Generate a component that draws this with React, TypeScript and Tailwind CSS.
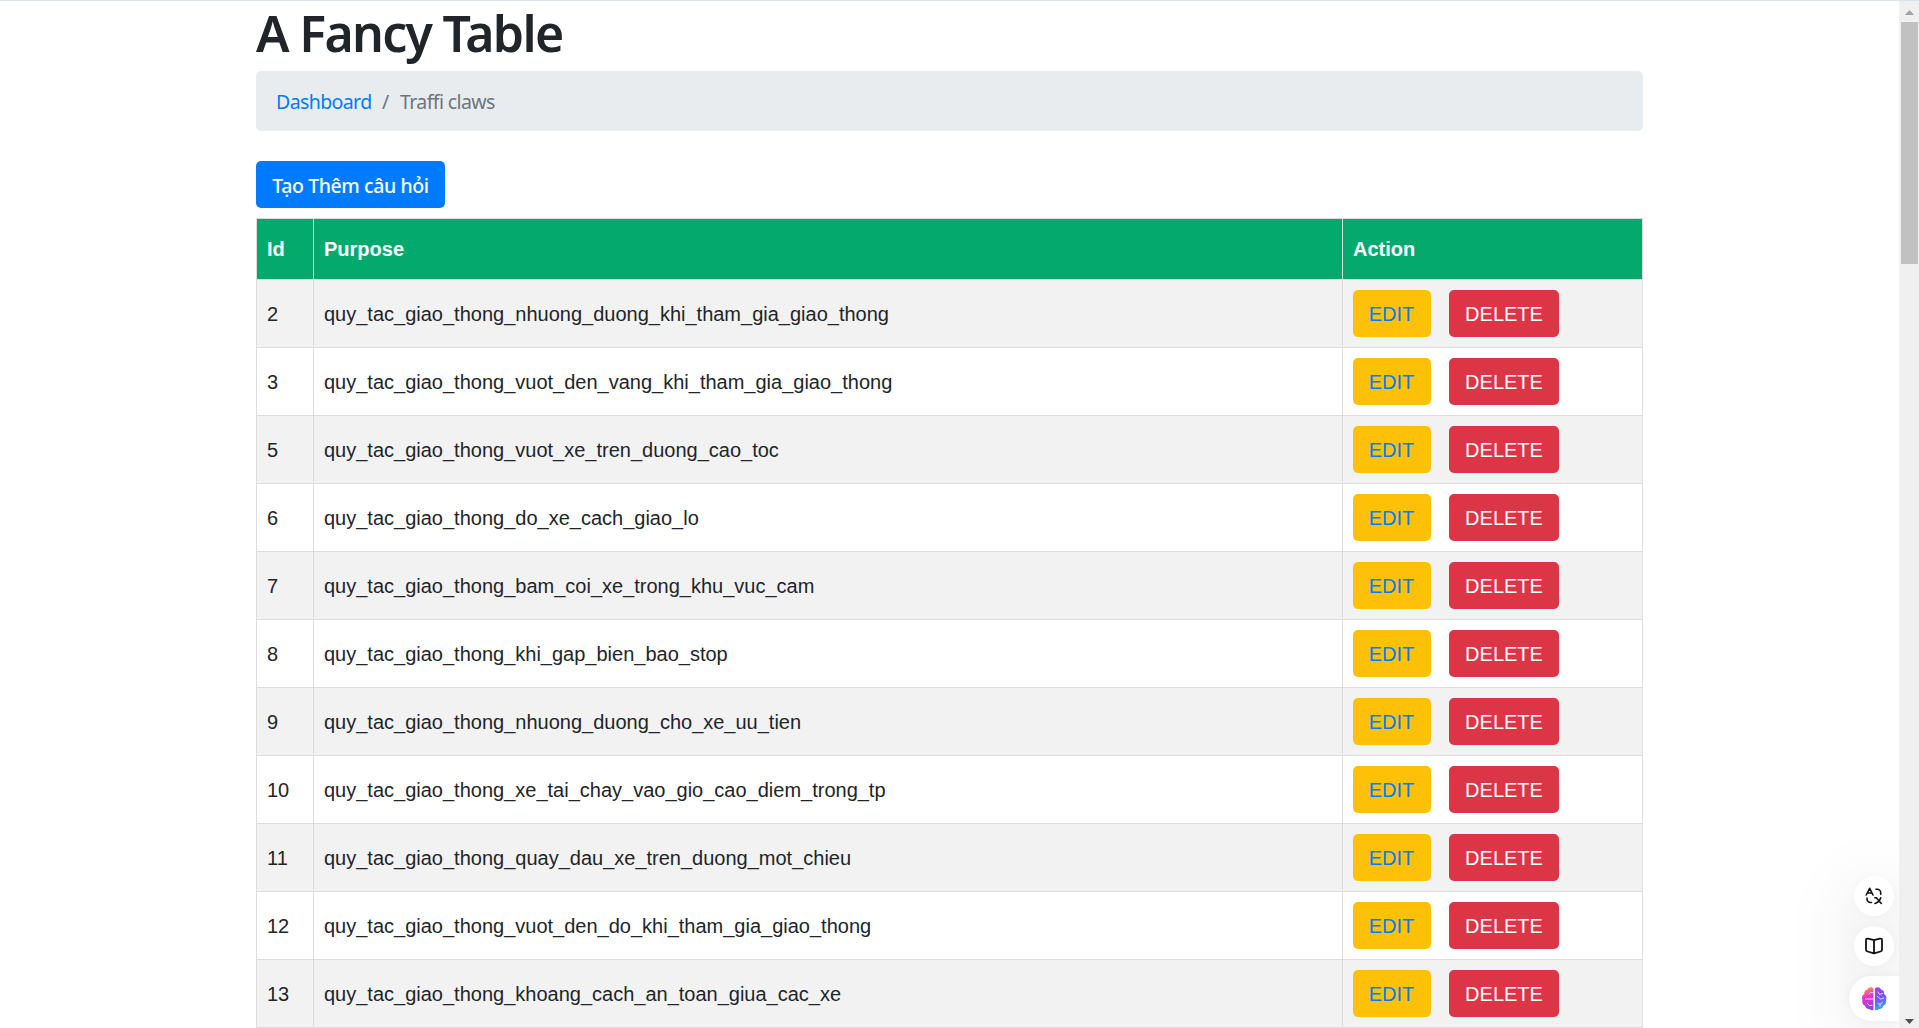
import React from "react";

const rows: [number, string][] = [
  [2, "quy_tac_giao_thong_nhuong_duong_khi_tham_gia_giao_thong"],
  [3, "quy_tac_giao_thong_vuot_den_vang_khi_tham_gia_giao_thong"],
  [5, "quy_tac_giao_thong_vuot_xe_tren_duong_cao_toc"],
  [6, "quy_tac_giao_thong_do_xe_cach_giao_lo"],
  [7, "quy_tac_giao_thong_bam_coi_xe_trong_khu_vuc_cam"],
  [8, "quy_tac_giao_thong_khi_gap_bien_bao_stop"],
  [9, "quy_tac_giao_thong_nhuong_duong_cho_xe_uu_tien"],
  [10, "quy_tac_giao_thong_xe_tai_chay_vao_gio_cao_diem_trong_tp"],
  [11, "quy_tac_giao_thong_quay_dau_xe_tren_duong_mot_chieu"],
  [12, "quy_tac_giao_thong_vuot_den_do_khi_tham_gia_giao_thong"],
  [13, "quy_tac_giao_thong_khoang_cach_an_toan_giua_cac_xe"],
];

function TranslateIcon() {
  return (
    <svg width="18" height="18" viewBox="0 0 18 18" fill="none" stroke="#111" strokeWidth="1.6" strokeLinecap="round" strokeLinejoin="round">
      <path d="M1.200 8 4.700 1.300 8 8M2.300 6h4.700" />
      <path d="M11 2.200h1.200a3.500 3.500 0 0 1 3.500 3.500v1.500" />
      <path d="M2 11v1a3.500 3.500 0 0 0 3.500 3.500h1" />
      <path d="M9.800 10.800h1.500l5 5.700M15.700 10.800c-.7 2.600-2.800 4.800-5.700 5.700" />
    </svg>
  );
}

function BookIcon() {
  return (
    <svg width="18" height="18" viewBox="0 0 18 18" fill="none" stroke="#111" strokeWidth="1.8" strokeLinecap="round" strokeLinejoin="round">
      <path d="M9 3.200 3.200 1.600Q1 1.300 1 3.200v9.600q0 1.300 1.600 1.700L9 16.400l6.400-1.900Q17 14.100 17 12.800V3.200q0-1.900-2.200-1.600L9 3.200v13" />
    </svg>
  );
}

function BrainIcon() {
  return (
    <svg width="26" height="26" viewBox="0 0 26 26" fill="none">
      <defs>
        <linearGradient id="brainLeft" x1="3" y1="2" x2="10" y2="24" gradientUnits="userSpaceOnUse">
          <stop stopColor="#ff9a3c" />
          <stop offset=".4" stopColor="#e835c8" />
          <stop offset="1" stopColor="#8a45ee" />
        </linearGradient>
        <linearGradient id="brainRight" x1="15" y1="2" x2="24" y2="23" gradientUnits="userSpaceOnUse">
          <stop stopColor="#a245ea" />
          <stop offset=".5" stopColor="#7357f3" />
          <stop offset="1" stopColor="#22b5ff" />
        </linearGradient>
      </defs>
      <path fill="url(#brainLeft)" d="M12.500 2.500C10.700.500 7.200 1 6.400 3.400 4 3.600 2.800 6 3.400 8 1 9 .3 12 1.400 14c-.7 3 .7 5 2.700 5.700.6 2.700 3.200 3.600 4.800 3.500 1.300 1.600 3 1.200 3.600.2Z" />
      <path fill="url(#brainRight)" d="M13.900 2.500c1.800-2 5.300-1.500 6.100.9 2.400.2 3.600 2.600 3 4.600 2.400 1 3.100 4 2 6 .7 3-.7 5-2.700 5.700-.6 2.700-3.200 3.600-4.800 3.500-1.300 1.600-3 1.200-3.600.2Z" />
      <g stroke="#fff" strokeOpacity=".75" strokeWidth="1" strokeLinecap="round" strokeLinejoin="round">
        <path d="M12.300 6.500H9.500L8 8M12.300 13H4.500M11 19.500H8.500L6.500 17.500" />
        <path d="M17 6l1.500 2.500 3-1M16.500 10.500l3 2.500 3.500-1M17 17.500l2 .8 2.500-2M19 18.300v2" />
      </g>
    </svg>
  );
}

export default function App() {
  return (
    <div className="flex h-[1028px] w-full overflow-hidden border-t border-[#dce3ec] bg-white font-['Liberation_Sans',Arial,sans-serif] text-xl text-[#212529]">
      <main className="relative flex-1 overflow-hidden pl-64">
        <div className="w-[1387px]">
          <h1 className="h-[70px] whitespace-nowrap font-['Noto_Sans',sans-serif] text-[50px] leading-[64px] font-semibold tracking-[-1.7px]">A Fancy Table</h1>
          <nav className="flex h-[60px] items-center rounded-[5px] bg-[#e9ecef] px-5 pt-0.5 font-['Noto_Sans',sans-serif] text-[19.5px] leading-[30px] tracking-[-0.6px]">
            <a className="w-[95px] whitespace-nowrap text-[#007bff]">Dashboard</a>
            <span className="w-[29px] pl-[11px] text-[#6c757d]">/</span>
            <span className="text-[#6c757d]">Traffi claws</span>
          </nav>
          <button className="mt-[30px] flex h-[47px] w-[189px] items-center justify-center rounded-[5px] bg-[#007bff] pt-0.5 font-['Noto_Sans',sans-serif] text-[19.5px] font-medium tracking-[-0.4px] whitespace-nowrap text-white">Tạo Thêm câu hỏi</button>
          <table className="mt-2.5 w-[1387px] table-fixed border-collapse">
            <colgroup>
              <col className="w-[57px]" />
              <col className="w-[1029px]" />
              <col className="w-[300px]" />
            </colgroup>
            <thead>
              <tr className="h-[61px] bg-[#04aa6d] text-left text-white">
                <th className="border border-[#ddd] px-2.5">Id</th>
                <th className="border border-[#ddd] px-2.5">Purpose</th>
                <th className="border border-[#ddd] px-2.5">Action</th>
              </tr>
            </thead>
            <tbody>
              {rows.map(([id, purpose]) => (
                <tr key={id} className="h-[68px] odd:bg-[#f2f2f2]">
                  <td className="border border-[#ddd] px-2.5">{id}</td>
                  <td className="border border-[#ddd] px-2.5">{purpose}</td>
                  <td className="border border-[#ddd] px-2.5">
                    <div className="flex gap-[18px]">
                      <button className="h-[47px] w-[78px] rounded-[5px] bg-[#ffc107] pr-px text-[#007bff]">EDIT</button>
                      <button className="h-[47px] w-[110px] rounded-[5px] bg-[#dc3545] text-white">DELETE</button>
                    </div>
                  </td>
                </tr>
              ))}
            </tbody>
          </table>
        </div>
        <div className="absolute right-0 bottom-[7px] flex flex-col items-end gap-2.5">
          <div className="absolute -inset-x-2 top-0 -bottom-8 rounded-full bg-black/5 blur-[26px]" />
          <div className="relative mr-[5px] flex size-10 items-center justify-center rounded-full bg-white shadow-[0_0_8px_rgba(0,0,0,0.03)]"><TranslateIcon /></div>
          <div className="relative mr-[5px] flex size-10 items-center justify-center rounded-full bg-white shadow-[0_0_8px_rgba(0,0,0,0.03)]"><BookIcon /></div>
          <div className="relative flex h-[45px] w-[50px] items-center rounded-l-full bg-white pl-3 shadow-[0_0_10px_rgba(0,0,0,0.05)]"><BrainIcon /></div>
        </div>
      </main>
      <aside className="relative flex w-5 flex-col items-center bg-[#f0f0f0]">
        <svg width="20" height="21" viewBox="0 0 20 21"><path d="M6 14h9l-4.500-5Z" fill="#a3a3a3" /></svg>
        <div className="ml-px h-[242px] w-[17px] bg-[#c1c1c1]" />
        <svg className="mt-auto" width="20" height="20" viewBox="0 0 20 20"><path d="M6 11h9l-4.500 5Z" fill="#505050" /></svg>
      </aside>
    </div>
  );
}
